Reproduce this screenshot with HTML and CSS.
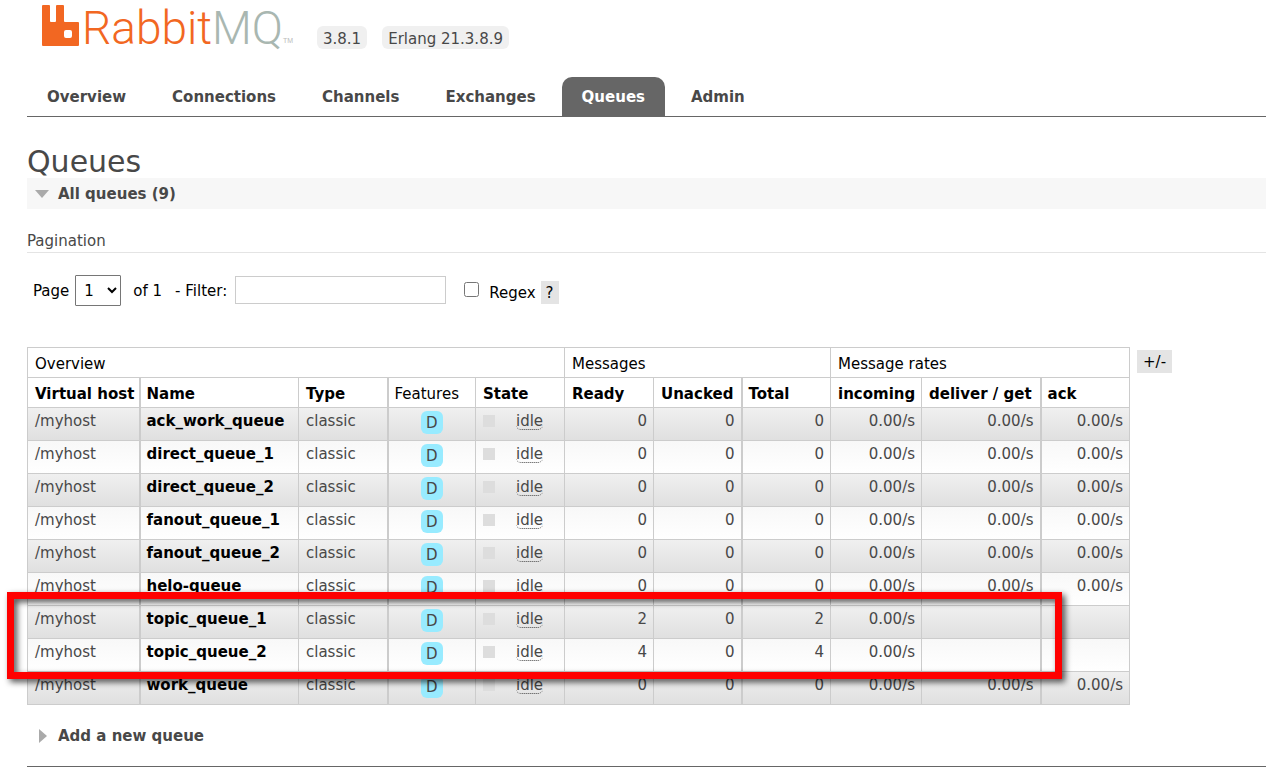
FILE: index.html
```html
<!DOCTYPE html>
<html lang="en">
<head>
<meta charset="utf-8">
<title>RabbitMQ Management</title>
<link rel="stylesheet" href="styles.css">
</head>
<body>
<header class="top">
  <a class="logo" href="#">
    <svg class="logo-mark" viewBox="0 0 37 41" aria-hidden="true"><path fill="#f26722" fill-rule="evenodd" d="M1 0H7Q8 0 8 1V16Q8 17 9 17H13Q14 17 14 16V1Q14 0 15 0H21Q22 0 22 1V16Q22 17 23 17H36Q37 17 37 18V40Q37 41 36 41H1Q0 41 0 40V1Q0 0 1 0ZM24 25Q22 25 22 27V31Q22 33 24 33H28Q30 33 30 31V27Q30 25 28 25Z"/></svg>
    <span class="logo-text">Rabbit<span class="logo-mq">MQ</span></span><span class="logo-tm">TM</span>
  </a>
  <span class="version">3.8.1</span>
  <span class="version">Erlang 21.3.8.9</span>
</header>
<nav class="tabs">
  <a href="#">Overview</a>
  <a href="#">Connections</a>
  <a href="#">Channels</a>
  <a href="#">Exchanges</a>
  <a class="selected" href="#">Queues</a>
  <a href="#">Admin</a>
</nav>
<main>
  <h1>Queues</h1>
  <h2 class="section open"><svg class="arrow" viewBox="0 0 16 16" aria-hidden="true"><path fill="#aaa" d="M1 4H15L8 12Z"/></svg>All queues (9)</h2>
  <h3>Pagination</h3>
  <form class="filters">
    <label for="page">Page</label>
    <select id="page"><option>1</option></select>
    <span class="of">of 1</span>
    <label class="filter-label" for="filter">- Filter:</label>
    <input class="filter" id="filter" type="text">
    <input class="regex" id="regex" type="checkbox">
    <span class="regex-group"><label for="regex">Regex</label>
    <button class="help" type="button">?</button></span>
  </form>
  <div class="listing">
    <div class="table-wrap">
    <table>
      <colgroup><col class="c-host"><col class="c-name"><col class="c-mid"><col class="c-slim"><col class="c-mid"><col class="c-mid"><col class="c-slim"><col class="c-mid"><col class="c-in"><col class="c-get"><col class="c-mid"></colgroup>
      <thead>
        <tr class="groups"><th colspan="5">Overview</th><th colspan="3">Messages</th><th colspan="3">Message rates</th></tr>
        <tr class="heads"><th>Virtual host</th><th>Name</th><th>Type</th><th class="plain">Features</th><th>State</th><th>Ready</th><th>Unacked</th><th>Total</th><th>incoming</th><th>deliver / get</th><th>ack</th></tr>
      </thead>
      <tbody>
        <tr><td>/myhost</td><td><a href="#">ack_work_queue</a></td><td>classic</td><td class="c"><span class="badge">D</span></td><td><span class="state"><i></i><abbr>idle</abbr></span></td><td class="r">0</td><td class="r">0</td><td class="r">0</td><td class="r">0.00/s</td><td class="r">0.00/s</td><td class="r">0.00/s</td></tr>
        <tr><td>/myhost</td><td><a href="#">direct_queue_1</a></td><td>classic</td><td class="c"><span class="badge">D</span></td><td><span class="state"><i></i><abbr>idle</abbr></span></td><td class="r">0</td><td class="r">0</td><td class="r">0</td><td class="r">0.00/s</td><td class="r">0.00/s</td><td class="r">0.00/s</td></tr>
        <tr><td>/myhost</td><td><a href="#">direct_queue_2</a></td><td>classic</td><td class="c"><span class="badge">D</span></td><td><span class="state"><i></i><abbr>idle</abbr></span></td><td class="r">0</td><td class="r">0</td><td class="r">0</td><td class="r">0.00/s</td><td class="r">0.00/s</td><td class="r">0.00/s</td></tr>
        <tr><td>/myhost</td><td><a href="#">fanout_queue_1</a></td><td>classic</td><td class="c"><span class="badge">D</span></td><td><span class="state"><i></i><abbr>idle</abbr></span></td><td class="r">0</td><td class="r">0</td><td class="r">0</td><td class="r">0.00/s</td><td class="r">0.00/s</td><td class="r">0.00/s</td></tr>
        <tr><td>/myhost</td><td><a href="#">fanout_queue_2</a></td><td>classic</td><td class="c"><span class="badge">D</span></td><td><span class="state"><i></i><abbr>idle</abbr></span></td><td class="r">0</td><td class="r">0</td><td class="r">0</td><td class="r">0.00/s</td><td class="r">0.00/s</td><td class="r">0.00/s</td></tr>
        <tr><td>/myhost</td><td><a href="#">helo-queue</a></td><td>classic</td><td class="c"><span class="badge">D</span></td><td><span class="state"><i></i><abbr>idle</abbr></span></td><td class="r">0</td><td class="r">0</td><td class="r">0</td><td class="r">0.00/s</td><td class="r">0.00/s</td><td class="r">0.00/s</td></tr>
        <tr><td>/myhost</td><td><a href="#">topic_queue_1</a></td><td>classic</td><td class="c"><span class="badge">D</span></td><td><span class="state"><i></i><abbr>idle</abbr></span></td><td class="r">2</td><td class="r">0</td><td class="r">2</td><td class="r">0.00/s</td><td></td><td></td></tr>
        <tr><td>/myhost</td><td><a href="#">topic_queue_2</a></td><td>classic</td><td class="c"><span class="badge">D</span></td><td><span class="state"><i></i><abbr>idle</abbr></span></td><td class="r">4</td><td class="r">0</td><td class="r">4</td><td class="r">0.00/s</td><td></td><td></td></tr>
        <tr><td>/myhost</td><td><a href="#">work_queue</a></td><td>classic</td><td class="c"><span class="badge">D</span></td><td><span class="state"><i></i><abbr>idle</abbr></span></td><td class="r">0</td><td class="r">0</td><td class="r">0</td><td class="r">0.00/s</td><td class="r">0.00/s</td><td class="r">0.00/s</td></tr>
      </tbody>
    </table>
    <div class="highlight"></div>
    </div>
    <button class="columns" type="button">+/-</button>
  </div>
  <h2 class="section"><svg class="arrow" viewBox="0 0 16 16" aria-hidden="true"><path fill="#aaa" d="M5 1V15L13 8Z"/></svg>Add a new queue</h2>
</main>
<footer></footer>
</body>
</html>
```
FILE: styles.css
```css
* { box-sizing: border-box; }
body {
  margin: 0;
  padding-left: 27px;
  background: #fff;
  color: #484848;
  font: 15px/20px Verdana, "DejaVu Sans", sans-serif;
}
a { color: inherit; text-decoration: none; }
button, input, select { font: inherit; color: #000; }

.top { display: flex; align-items: flex-start; height: 77px; padding-left: 15px; }
.logo { display: flex; align-items: flex-start; width: 260px; padding-top: 5px; }
.logo-mark { width: 37px; height: 41px; flex: none; }
.logo-text {
  margin: -7px 0 0 3px;
  color: #f26722;
  font: 300 46px/60px Roboto, sans-serif;
}
.logo-mq { color: #a9b7b1; }
.logo-tm { margin-top: 30px; color: #bbb; font: 7px/12px "Liberation Sans", sans-serif; }
.version {
  margin: 26px 0 0 15px;
  padding: 3px 6px 0;
  border-radius: 6px;
  background: #f0f0f0;
  white-space: nowrap;
}

.tabs { display: flex; gap: 6px; height: 40px; border-bottom: 1px solid #666; font-weight: bold; }
.tabs a { height: 39px; padding: 10px 20px 9px; border-radius: 10px 10px 0 0; }
.tabs .selected { background: #666; color: #fff; }

h1 { margin: 28px 0 0; font-size: 30px; line-height: 33px; font-weight: normal; }
.section { display: flex; align-items: center; gap: 8px; height: 31px; margin: 0; padding-left: 7px; font-size: 15px; }
.section.open { background: #f7f7f7; }
.arrow { width: 16px; height: 16px; }
h3 { margin: 22px 0; padding-bottom: 1px; border-bottom: 1px solid #e4e4e4; font-size: 15px; font-weight: normal; }

.filters { display: flex; align-items: center; height: 31px; padding-left: 6px; color: #000; }
.filters select { width: 46px; height: 31px; margin: 0 12px 0 6px; padding: 0 4px; border: 1px solid #767676; border-radius: 1px; background: #fff; }
.filter-label { margin: 0 8px 0 13px; }
.filter { width: 211px; height: 28px; margin-bottom: 1px; padding: 4px; border: 1px solid #ccc; }
.regex { width: 15px; height: 15px; margin: 0 10px 2px 18px; }
.regex-group { display: flex; align-items: center; gap: 5px; padding-top: 4px; }
.help, .columns { height: 23px; padding: 0 5px; border: 0; background: #e4e4e4; }
.columns { padding: 0 6px; }

.listing { display: flex; align-items: flex-start; gap: 7px; margin-top: 41px; }
.columns { margin-top: 3px; }
.table-wrap { position: relative; }
table { width: 1102px; border-collapse: collapse; table-layout: fixed; }
.c-host { width: 112px; }
.c-name { width: 159px; }
.c-mid { width: 89px; }
.c-slim { width: 88px; }
.c-in { width: 91px; }
.c-get { width: 119px; }
th, td { border: 1px solid #ccc; padding: 0 6px 0 7px; text-align: left; white-space: nowrap; }
th { height: 30px; padding-top: 3px; color: #000; }
.groups th, .plain { font-weight: normal; }
td { height: 33px; padding-top: 3px; vertical-align: top; }
.heads th:nth-child(2), .heads th:nth-child(4), .heads th:nth-child(8), .heads th:nth-child(11),
td:nth-child(2), td:nth-child(4), td:nth-child(8), td:nth-child(11) { border-left-width: 2px; padding-left: 6px; }
td a { color: #000; font-weight: bold; }
tbody tr { background: linear-gradient(#f8f8f8, #fff); }
tbody tr:nth-child(odd) { background: linear-gradient(#f0f0f0, #dfdfdf); }
.r { text-align: right; }
.c { text-align: center; }
.badge { display: inline-block; height: 23px; padding: 2px 5px; border-radius: 6px; background: #98ebff; }
.state { display: flex; align-items: center; gap: 21px; }
.state i { width: 12px; height: 12px; background: #ddd; }
.state abbr { height: 19px; line-height: 20px; border-bottom: 1px dotted #444; border-radius: 5px; }
.highlight {
  position: absolute;
  top: 245px;
  left: -20px;
  width: 1055px;
  height: 87px;
  border: 7px solid #f00;
  filter: drop-shadow(3px 3px 3px rgba(0, 0, 0, .7));
}
.listing + .section { margin-top: 15px; }
footer { margin-top: 15px; border-top: 1px solid #666; }
```
